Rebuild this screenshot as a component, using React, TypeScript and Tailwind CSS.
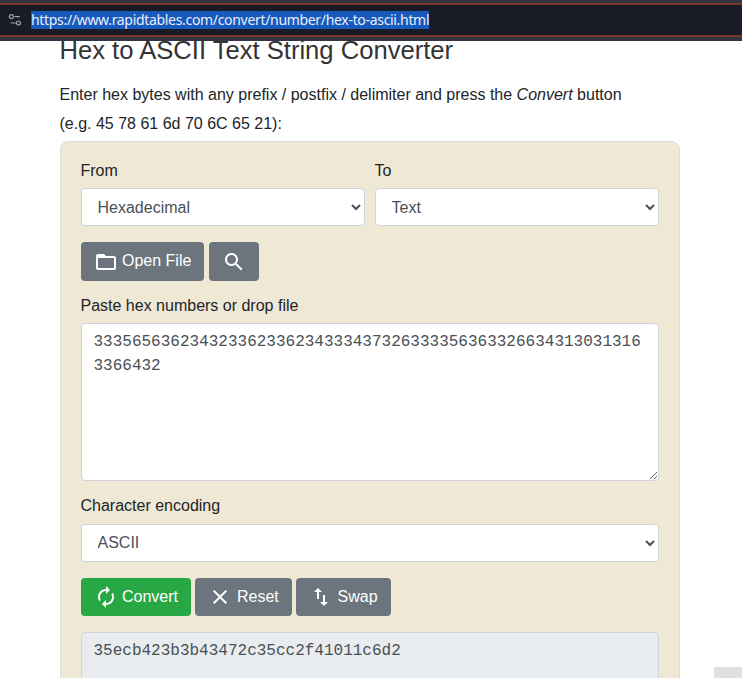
import React from 'react';

const SANS = "font-['Liberation_Sans',Arial,sans-serif]";
const MONO = "font-['Liberation_Mono','Courier_New',monospace]";

const icons = {
  folder:
    'M20 6h-8l-2-2H4c-1.1 0-1.99.9-1.99 2L2 18c0 1.1.9 2 2 2h16c1.1 0 2-.9 2-2V8c0-1.1-.9-2-2-2zm0 12H4V8h16v10z',
  search:
    'M15.5 14h-.79l-.28-.27C15.41 12.59 16 11.11 16 9.5 16 5.91 13.09 3 9.5 3S3 5.91 3 9.5 5.91 16 9.5 16c1.61 0 3.09-.59 4.23-1.57l.27.28v.79l5 4.99L20.49 19l-4.99-5zm-6 0C7.01 14 5 11.99 5 9.5S7.01 5 9.5 5 14 7.01 14 9.5 11.99 14 9.5 14z',
  renew:
    'M12 6v3l4-4-4-4v3c-4.42 0-8 3.58-8 8 0 1.57.46 3.03 1.24 4.26L6.7 14.8c-.45-.83-.7-1.79-.7-2.8 0-3.31 2.69-6 6-6zm6.76 1.74L17.3 9.2c.44.84.7 1.79.7 2.8 0 3.31-2.69 6-6 6v-3l-4 4 4 4v-3c4.42 0 8-3.58 8-8 0-1.57-.46-3.03-1.24-4.26z',
  close:
    'M19 6.41L17.59 5 12 10.59 6.41 5 5 6.41 10.59 12 5 17.59 6.41 19 12 13.41 17.59 19 19 17.59 13.41 12z',
  swap: 'M16 17.01V10h-2v7.01h-3L15 21l4-3.99h-3zM9 3L5 6.99h3V14h2V6.99h3L9 3z',
};

function Icon({ name }: { name: keyof typeof icons }) {
  return (
    <svg className="size-6 shrink-0" viewBox="0 0 24 24" fill="currentColor">
      <path d={icons[name]} />
    </svg>
  );
}

const button = 'flex items-center rounded-[4px] px-[13px] text-white whitespace-nowrap';

function Select({ value }: { value: string }) {
  return (
    <select className="block h-[38px] w-full rounded-[4px] border border-[#ced4da] bg-white px-3 py-1.5 text-[#495057]">
      <option>{value}</option>
    </select>
  );
}

function AddressBar() {
  return (
    <header className="relative z-10 h-[41px] bg-[#323543] pt-[3px]">
      <div className="flex h-[34px] items-center border-y-2 border-[#7c342c] bg-[#191c24] pl-2">
        <svg className="h-[14px] w-[14px]" viewBox="0 0 14 14" fill="none" stroke="#a5a7ad" strokeWidth="1.2">
          <circle cx="3.4" cy="3.7" r="2" />
          <path d="M6.6 3.7H11.7M2.8 10H7.6" />
          <circle cx="10.4" cy="10" r="2" />
        </svg>
        <span className="ml-[9px] h-[18px] w-[398px] bg-[#185abc] font-['Noto_Sans',sans-serif] text-[14px] leading-[18px] tracking-[-0.318px] whitespace-nowrap text-[#e8eefb]">
          https://www.rapidtables.com/convert/number/hex-to-ascii.html
        </span>
      </div>
    </header>
  );
}

export default function App() {
  return (
    <div className={`relative h-[678px] overflow-hidden bg-white text-base text-[#212529] ${SANS}`}>
      <AddressBar />
      <main className="ml-[59.5px] w-[620px]">
        <h2 className="-mt-[6px] text-[25.6px] leading-[31px] text-[#333]">Hex to ASCII Text String Converter</h2>
        <p className="mt-[14px] leading-[29px]">
          Enter hex bytes with any prefix / postfix / delimiter and press the <i>Convert</i> button
          <br />
          (e.g. 45 78 61 6d 70 6C 65 21):
        </p>
        <form className="mt-[3px] h-[620px] rounded-[8px] border border-[#dcdcdc] bg-[#efe8d5] px-5 pt-[17px]">
          <div className="grid grid-cols-2 gap-[10px]">
            <div>
              <label className="mb-[5px] block leading-6">From</label>
              <Select value="Hexadecimal" />
            </div>
            <div>
              <label className="mb-[5px] block leading-6">To</label>
              <Select value="Text" />
            </div>
          </div>
          <div className="mt-4 flex gap-[5px]">
            <button type="button" className={`${button} h-[39px] w-[123px] gap-[4.5px] bg-[#6c757d]`}>
              <Icon name="folder" />
              <span className="-mt-0.5">Open File</span>
            </button>
            <button type="button" className={`${button} h-[39px] w-[50px] bg-[#6c757d]`}>
              <Icon name="search" />
            </button>
          </div>
          <label className="mt-[13px] mb-[5px] block leading-6">Paste hex numbers or drop file</label>
          <textarea
            className={`block h-[158px] w-full rounded-[4px] border border-[#ced4da] bg-white px-3 py-1.5 leading-6 break-all text-[#495057] ${MONO}`}
            defaultValue="3335656362343233623362343334373263333563633266343130313163366432"
          />
          <label className="mt-[13px] mb-[5.6px] block leading-6">Character encoding</label>
          <Select value="ASCII" />
          <div className="mt-[16.4px] flex gap-1">
            <button type="button" className={`${button} h-[38px] w-[110px] gap-[4.5px] bg-[#28a745]`}>
              <Icon name="renew" />
              Convert
            </button>
            <button type="button" className={`${button} h-[38px] w-[97px] gap-[5.5px] bg-[#6c757d]`}>
              <Icon name="close" />
              Reset
            </button>
            <button type="button" className={`${button} h-[38px] w-[95px] gap-[5px] bg-[#6c757d]`}>
              <Icon name="swap" />
              Swap
            </button>
          </div>
          <textarea
            readOnly
            className={`mt-4 block h-[158px] w-full rounded-[4px] border border-[#ced4da] bg-[#e9ecef] px-3 py-1.5 leading-6 text-[#495057] ${MONO}`}
            defaultValue="35ecb423b3b43472c35cc2f41011c6d2"
          />
        </form>
      </main>
      <div className="absolute right-0 bottom-0 h-[11px] w-7 bg-[#dfdfdf]" />
    </div>
  );
}
